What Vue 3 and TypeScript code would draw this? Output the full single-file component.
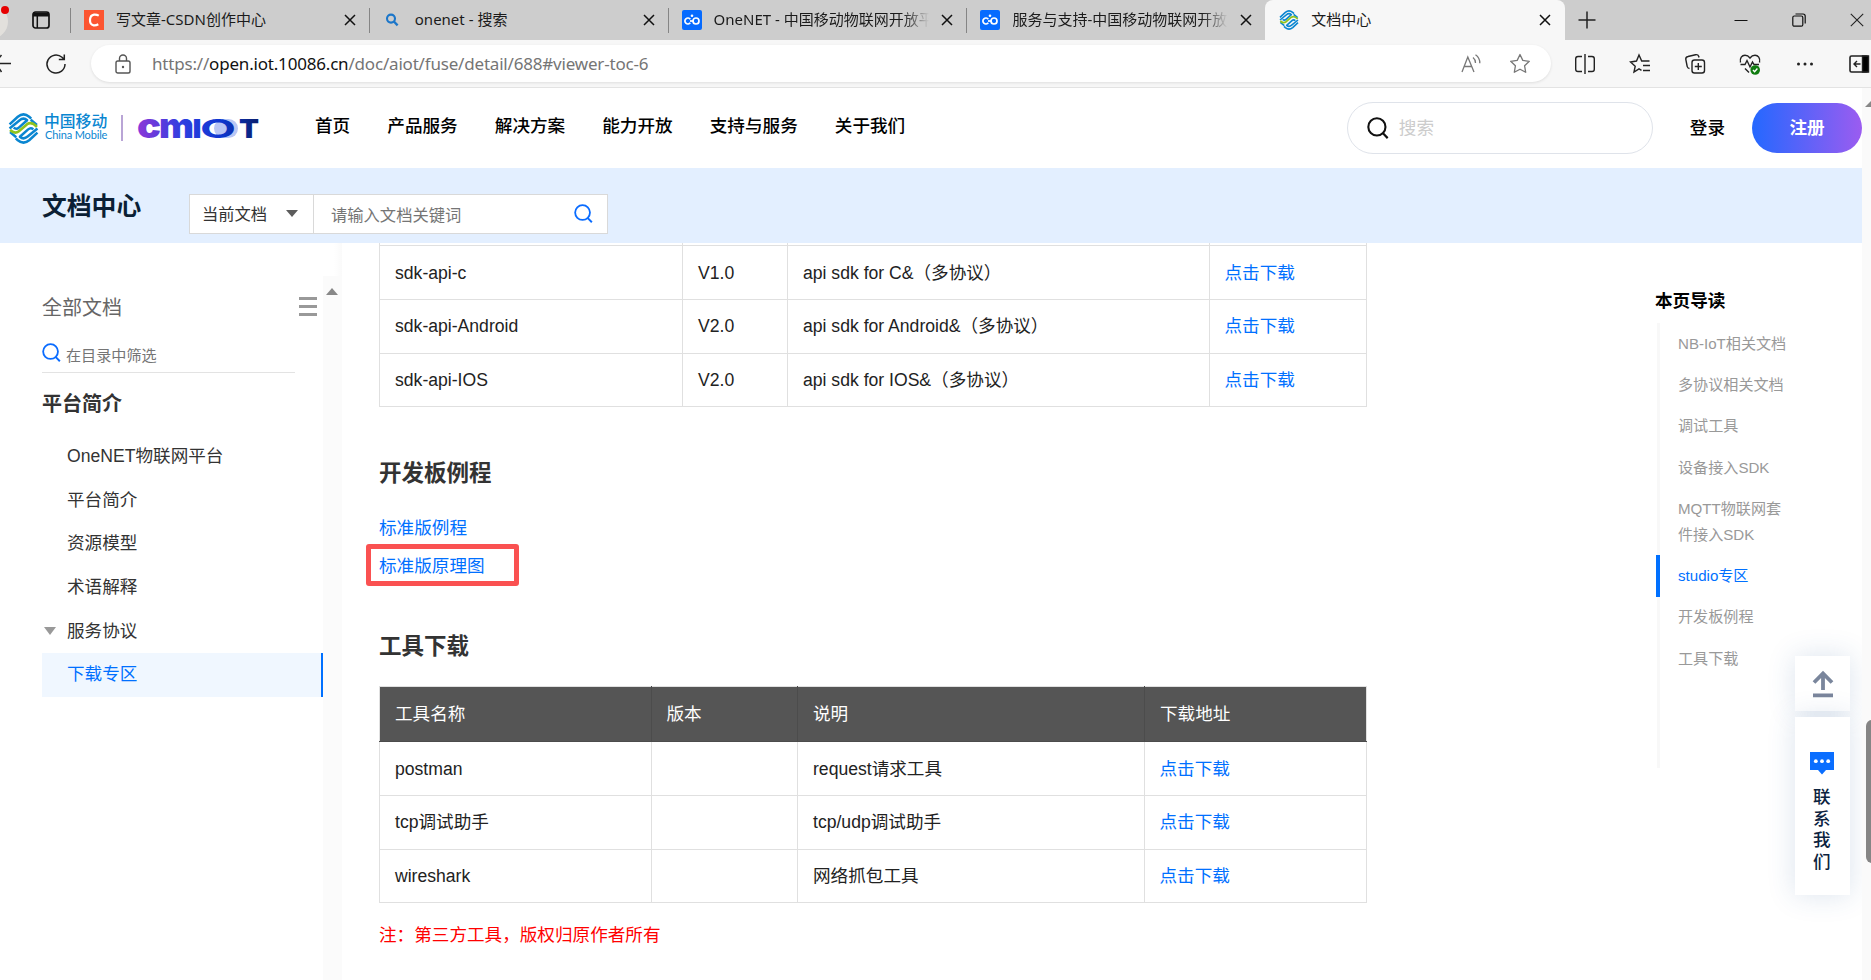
<script setup lang="ts">
interface Tab { title: string; icon: 'csdn' | 'search' | 'onenet' | 'mobile'; active?: boolean; faded?: boolean }
interface TocItem { text: string; active?: boolean }

const tabs: Tab[] = [
  { title: '写文章-CSDN创作中心', icon: 'csdn' },
  { title: 'onenet - 搜索', icon: 'search' },
  { title: 'OneNET - 中国移动物联网开放平台', icon: 'onenet', faded: true },
  { title: '服务与支持-中国移动物联网开放平台', icon: 'onenet', faded: true },
  { title: '文档中心', icon: 'mobile', active: true },
]
const nav: string[] = ['首页', '产品服务', '解决方案', '能力开放', '支持与服务', '关于我们']
const menu: string[] = ['OneNET物联网平台', '平台简介', '资源模型', '术语解释', '服务协议']
const sdkRows: string[][] = [
  ['sdk-api-c', 'V1.0', 'api sdk for C&（多协议）'],
  ['sdk-api-Android', 'V2.0', 'api sdk for Android&（多协议）'],
  ['sdk-api-IOS', 'V2.0', 'api sdk for IOS&（多协议）'],
]
const toolRows: string[][] = [
  ['postman', '', 'request请求工具'],
  ['tcp调试助手', '', 'tcp/udp调试助手'],
  ['wireshark', '', '网络抓包工具'],
]
const toc: TocItem[] = [
  { text: 'NB-IoT相关文档' },
  { text: '多协议相关文档' },
  { text: '调试工具' },
  { text: '设备接入SDK' },
  { text: 'MQTT物联网套件接入SDK' },
  { text: 'studio专区', active: true },
  { text: '开发板例程' },
  { text: '工具下载' },
]
</script>

<template>
  <div class="window">
    <svg class="defs" width="0" height="0">
      <defs>
        <symbol id="cm" viewBox="0 0 30 30">
          <g fill="none" stroke-linejoin="round">
            <g stroke="#0a86d1" stroke-width="2.4">
              <path d="M1.5 11 9.5 3.6Q15-1 20.5 3.6L22.5 5.4" />
              <path d="M1.5 15 11 7.2Q15 3.8 18.5 7L10.5 14.2Q8 16.4 5.5 14.2" />
              <path d="M28.500 19 20.500 26.400Q15 31 9.500 26.400L7.500 24.600" />
              <path d="M28.500 15 19 22.800Q15 26.200 11.500 23L19.500 15.800Q22 13.600 24.500 15.800" />
              <path d="M22 6.500 28 11.500M2 18.500 8 23.500" />
            </g>
            <path d="M2 16.500Q6.500 20.800 10.500 17.600L18.500 10.800Q23 8 28 13.500" stroke="#8fc31f" stroke-width="2.600" />
          </g>
        </symbol>
        <symbol id="mag" viewBox="0 0 20 20">
          <circle cx="9" cy="9" r="7.800" fill="none" stroke="currentColor" stroke-width="1.900" />
          <path d="M14.500 14.800 18.800 19.200" fill="none" stroke="currentColor" stroke-width="2" />
        </symbol>
      </defs>
    </svg>

    <header class="tabstrip">
      <div class="lead">
        <span class="avatar"></span><span class="reddot"></span>
        <svg class="ws" width="18" height="18" viewBox="0 0 18 18"><rect x="1" y="1" width="16" height="16" rx="2.500" fill="none" stroke="#111" stroke-width="1.700" /><path d="M1 1.500h16v4H1z" fill="#111" /><path d="M5.300 5v12" stroke="#111" stroke-width="1.500" /></svg>
      </div>
      <div v-for="(tab, i) in tabs" :key="i" class="tab" :class="{ active: tab.active }">
        <svg v-if="tab.icon === 'csdn'" class="fav" viewBox="0 0 20 20"><rect width="20" height="20" fill="#fc5531" /><path d="M14.800 5.600Q12.500 4.300 10 4.600 6.300 5.200 6 9.600 5.700 14.600 9.600 15.300 12 15.600 14.300 14.200" fill="none" stroke="#fff" stroke-width="2.200" /></svg>
        <svg v-else-if="tab.icon === 'search'" class="fav" viewBox="0 0 20 20"><circle cx="8" cy="8.600" r="4" fill="none" stroke="#1b76c9" stroke-width="2.100" /><path d="M10.900 11.500 14.600 15.400" stroke="#1b76c9" stroke-width="2.300" /></svg>
        <svg v-else-if="tab.icon === 'onenet'" class="fav" viewBox="0 0 20 20"><rect width="20" height="20" rx="2" fill="#066bff" /><g fill="none" stroke="#fff" stroke-width="1.700"><path d="M8.300 9.200A3 3 0 1 0 8.300 12.800" /><circle cx="14" cy="11" r="3" /><path d="M8 11h3" /></g><circle cx="10" cy="5.800" r="1.300" fill="#fff" /></svg>
        <svg v-else class="fav" viewBox="0 0 30 30"><use href="#cm" /></svg>
        <span class="tabtitle" :class="{ faded: tab.faded }">{{ tab.title }}</span>
        <svg class="x" width="12" height="12" viewBox="0 0 12 12"><path d="M1 1 11 11M11 1 1 11" stroke="#111" stroke-width="1.500" /></svg>
      </div>
      <svg class="plus" width="18" height="18" viewBox="0 0 18 18"><path d="M9 .5v17M.5 9h17" stroke="#222" stroke-width="1.500" /></svg>
      <div class="winctl">
        <svg width="14" height="14" viewBox="0 0 14 14"><path d="M.5 7.500h13" stroke="#111" /></svg>
        <svg width="14" height="14" viewBox="0 0 14 14"><rect x=".8" y="3" width="10" height="10.200" rx="1.500" fill="none" stroke="#111" stroke-width="1.200" /><path d="M3.500 1h7.500q2.200 0 2.200 2.200v7.300" fill="none" stroke="#111" stroke-width="1.200" /></svg>
        <svg width="14" height="14" viewBox="0 0 14 14"><path d="M.8.8 13.200 13.200M13.200.8.8 13.200" stroke="#222" stroke-width="1.100" /></svg>
      </div>
    </header>

    <div class="toolbar">
      <svg class="back" width="12" height="20" viewBox="0 0 12 20"><path d="M0 9.500h11M1.500 1-1 4M1.500 18l-2-3" stroke="#222" stroke-width="1.500" fill="none" /></svg>
      <svg class="reload" width="22" height="22" viewBox="0 0 22 22"><path d="M20 11a9 9 0 1 1-3-6.700L19 6.300M19.300 1.500v5h-5.500" fill="none" stroke="#222" stroke-width="1.500" /></svg>
      <div class="address">
        <svg width="16" height="20" viewBox="0 0 16 20"><rect x="1" y="7" width="14" height="12" rx="1.800" fill="none" stroke="#555" stroke-width="1.400" /><path d="M4.500 7V4.500a3.500 3.500 0 0 1 7 0V7" fill="none" stroke="#555" stroke-width="1.400" /><circle cx="8" cy="13" r="1.200" fill="#555" /></svg>
        <span class="url">https://<b>open.iot.10086.cn</b>/doc/aiot/fuse/detail/688#viewer-toc-6</span>
        <svg class="read" width="20" height="20" viewBox="0 0 20 20" fill="none" stroke="#777" stroke-width="1.300"><path d="M1 18 6.800 3 13 18M3.200 12.500h7.500M12 3.500q2.500 2 2.500 5.500M14.500.8q4.500 3.200 4.300 8.500" /></svg>
        <svg width="22" height="21" viewBox="0 0 22 21"><path d="M11 1.500 13.800 7.400 20.300 8.300 15.600 12.800 16.700 19.300 11 16.200 5.300 19.300 6.400 12.800 1.700 8.300 8.200 7.400Z" fill="none" stroke="#777" stroke-width="1.300" stroke-linejoin="round" /></svg>
      </div>
      <div class="tools">
        <svg viewBox="0 0 22 22"><path d="M8 3.500H4Q1.700 3.500 1.700 5.800V16.200Q1.700 18.500 4 18.500H8M14 3.500h4q2.300 0 2.300 2.300V16.200q0 2.300-2.300 2.300h-4M11 1v20" /></svg>
        <svg viewBox="0 0 22 22"><path d="M12.500 17.300 10 15.800 5 19 6.200 13.200 1.500 9 7.500 8 10 2 12.700 8H20.500M14 12.500h7M14 17.500h7" /></svg>
        <svg viewBox="0 0 22 22"><rect x="8" y="7" width="12.500" height="13" rx="2.500" /><path d="M14.300 10v7M10.800 13.500h7M5.500 15.500Q3.500 15.300 3.200 13.500L1.800 6.500Q1.500 4 4 3.500L11.500 1.700Q14 1.200 14.800 3.500L15 4.500" /></svg>
        <svg viewBox="0 0 22 22"><path d="M10 19.500 6 15.500M1.500 9.500C.5 5 3 2.300 6 2.300 8.500 2.300 10 3.700 11 5 12 3.700 13.500 2.300 16 2.300c3 0 5.500 2.700 4.500 7.200M1.500 11.500H6L8 7.500 11 14 13.500 9l1.500 2.500h5" /><circle cx="16.200" cy="17" r="4.800" fill="#107c10" stroke="none" /><path d="M14 17l1.600 1.700 2.800-3.200" stroke="#fff" /></svg>
        <svg viewBox="0 0 22 22"><g fill="#222" stroke="none"><circle cx="4.500" cy="11" r="1.500" /><circle cx="11" cy="11" r="1.500" /><circle cx="17.500" cy="11" r="1.500" /></g></svg>
        <svg viewBox="0 0 22 22"><rect x="1" y="3" width="18" height="16" rx="1.500" stroke-width="1.600" /><path d="M13.500 3h6v16h-6z" fill="#000" /><path d="M11.500 11H5M8 8l-3 3 3 3" /></svg>
      </div>
    </div>

    <div class="page">
      <div class="sitehead">
        <svg class="cmlogo" width="31" height="31"><use href="#cm" /></svg>
        <div class="brand"><span class="zh">中国移动</span><span class="en">China Mobile</span></div>
        <i class="bar"></i>
        <svg class="cmiot" width="124" height="24" viewBox="0 0 124 24">
          <defs>
            <linearGradient id="g" gradientUnits="userSpaceOnUse" x1="0" y1="0" x2="120" y2="0"><stop offset="0" stop-color="#8a38d8" /><stop offset=".38" stop-color="#2d3fe0" /><stop offset=".7" stop-color="#0d36cf" /><stop offset="1" stop-color="#0a2070" /></linearGradient>
          </defs>
          <rect x="76" y="3" width="24" height="19" rx="9.500" fill="#b9c6f5" />
          <g class="mark" fill="url(#g)">
            <text x="-1" y="21.600" font-size="34" textLength="24" lengthAdjust="spacingAndGlyphs">c</text>
            <text x="21" y="22" font-size="34" textLength="35" lengthAdjust="spacingAndGlyphs">m</text>
            <text x="54.500" y="22" font-size="26" textLength="9" lengthAdjust="spacingAndGlyphs">I</text>
            <text class="o" x="62" y="21.800" font-size="25.500" textLength="36" lengthAdjust="spacingAndGlyphs">O</text>
            <text x="101" y="22" font-size="26" textLength="20" lengthAdjust="spacingAndGlyphs">T</text>
          </g>
        </svg>
        <nav><a v-for="n in nav" :key="n">{{ n }}</a></nav>
        <div class="sitesearch"><svg width="22" height="22"><use href="#mag" /></svg><span>搜索</span></div>
        <a class="login">登录</a>
        <a class="register">注册</a>
      </div>

      <div class="band">
        <h1>文档中心</h1>
        <div class="docsearch">
          <div class="select">当前文档<i class="caret"></i></div>
          <div class="field"><span>请输入文档关键词</span><svg width="19" height="19"><use href="#mag" /></svg></div>
        </div>
      </div>

      <div class="body">
        <aside class="side">
          <div class="sidebody">
            <div class="all">全部文档<span class="burger"><i></i><i></i><i></i></span></div>
            <div class="filter"><svg width="19" height="19"><use href="#mag" /></svg><span>在目录中筛选</span></div>
            <h2>平台简介</h2>
            <ul>
              <li v-for="(m, i) in menu" :key="m"><i v-if="i === 4" class="fold"></i>{{ m }}</li>
              <li class="current">下载专区</li>
            </ul>
          </div>
          <div class="track"><i></i></div>
        </aside>

        <main>
          <table class="sdk">
            <colgroup><col class="a1" /><col class="a2" /><col class="a3" /><col class="a4" /></colgroup>
            <tbody>
              <tr class="cut"><td></td><td></td><td></td><td></td></tr>
              <tr v-for="r in sdkRows" :key="r[0]"><td v-for="(c, i) in r" :key="i">{{ c }}</td><td><a>点击下载</a></td></tr>
            </tbody>
          </table>
          <h3 class="h-board">开发板例程</h3>
          <p class="link"><a>标准版例程</a></p>
          <p class="link"><a>标准版原理图</a><span class="mark-box"></span></p>
          <h3 class="h-tools">工具下载</h3>
          <table class="toolt">
            <colgroup><col class="b1" /><col class="b2" /><col class="b3" /><col class="b4" /></colgroup>
            <thead><tr><th>工具名称</th><th>版本</th><th>说明</th><th>下载地址</th></tr></thead>
            <tbody>
              <tr v-for="r in toolRows" :key="r[0]"><td v-for="(c, i) in r" :key="i">{{ c }}</td><td><a>点击下载</a></td></tr>
            </tbody>
          </table>
          <p class="note">注：第三方工具，版权归原作者所有</p>
        </main>

        <aside class="toc">
          <h4>本页导读</h4>
          <ul><li v-for="t in toc" :key="t.text" :class="{ on: t.active }">{{ t.text }}</li></ul>
        </aside>
      </div>

      <div class="float">
        <div class="top"><svg width="22" height="28" viewBox="0 0 22 28"><path d="M11 20V3.500M2 12.500 11 3.500 20 12.500M1 25.300h20" fill="none" stroke="#7a869c" stroke-width="3.800" /></svg></div>
        <div class="contact">
          <svg width="24" height="23" viewBox="0 0 24 23"><path d="M0 0h24v18h-8l-4 4.500L8 18H0z" fill="#0a6eff" /><g fill="#fff"><circle cx="5.800" cy="9.200" r="1.900" /><circle cx="12" cy="9.200" r="1.900" /><circle cx="18.200" cy="9.200" r="1.900" /></g></svg>
          <span>联系我们</span>
        </div>
      </div>
      <div class="scroll"><i class="up"></i><i class="thumb"></i></div>
    </div>
  </div>
</template>

<style>
html, body { overflow: hidden; background: #fff; }
</style>

<style scoped>
* { box-sizing: border-box; }
h1, h2, h3, h4, p, ul { margin: 0; padding: 0; }
ul { list-style: none; }
svg { display: block; flex: none; }
.window { width: 1871px; height: 980px; display: flex; flex-direction: column; overflow: hidden; font-family: "Liberation Sans", "Noto Sans CJK SC", sans-serif; color: #222; white-space: nowrap; }
.defs { position: absolute; }

.tabstrip { height: 40px; flex: none; background: #cdcdcd; display: flex; align-items: center; font: 15px/20px "Noto Sans", "Noto Sans CJK SC", sans-serif; color: #1b1b1b; }
.lead { width: 70px; height: 40px; flex: none; position: relative; padding: 11px 0 0 32px; overflow: hidden; }
.avatar { position: absolute; left: -27px; top: 4px; width: 35px; height: 35px; border-radius: 50%; background: #e2e0dc; }
.reddot { position: absolute; left: 1px; top: 6px; width: 8px; height: 8px; border-radius: 50%; background: #e60000; }
.tab { width: 298.800px; height: 40px; flex: none; display: flex; align-items: center; padding: 0 13px 0 14px; position: relative; }
.tab:not(.active)::before { content: ""; position: absolute; left: 0; top: 8px; width: 1px; height: 25px; background: #858585; }
.tab.active { background: #f7f7f7; border-radius: 8px 8px 0 0; width: 300px; padding: 0 14px 0 14px; }
.fav { width: 20px; height: 20px; margin-right: 12px; }
.tabtitle { flex: 1; overflow: hidden; font-size: 15px; margin-top: -2px; }
.tabtitle.faded { -webkit-mask-image: linear-gradient(90deg, #000 88%, transparent); mask-image: linear-gradient(90deg, #000 88%, transparent); }
.x { margin-left: 12px; }
.plus { margin-left: 13px; }
.winctl { margin-left: auto; display: flex; gap: 44px; padding-right: 7px; }

.toolbar { height: 48px; flex: none; background: #f7f7f7; border-bottom: 1px solid #e3e3e3; display: flex; align-items: center; }
.back { margin-right: 33px; }
.reload { margin-right: 24px; }
.address { width: 1460px; height: 37px; border-radius: 19px; background: #fff; box-shadow: 0 1px 3px rgba(0, 0, 0, .1); display: flex; align-items: center; padding: 0 20px 0 24px; }
.url { margin-left: 21px; font: 17px/24px "Noto Sans", "Open Sans", sans-serif; letter-spacing: -.19px; color: #757575; }
.url b { font-weight: 400; color: #111; }
.read { margin-left: auto; margin-right: 28px; }
.tools { display: flex; gap: 33px; padding-left: 23.500px; }
.tools svg { width: 22px; height: 22px; fill: none; stroke: #222; stroke-width: 1.400; }

.page { height: 892px; flex: none; position: relative; }
.sitehead { height: 80px; width: 1862px; display: flex; align-items: center; padding-left: 8px; }
.brand { margin-left: 5px; width: 65px; display: flex; flex-direction: column; color: #0a86d1; position: relative; top: -2px; }
.zh { font: 500 15.800px/17px "Noto Sans CJK SC", sans-serif; }
.en { font: 11px/12px Lato, sans-serif; letter-spacing: -.15px; padding-left: 1px; }
.bar { width: 2px; height: 26px; background: #b9a5d6; margin-left: 12px; }
.cmiot { margin-left: 15px; overflow: visible; }
.mark { font-family: Inter, sans-serif; font-weight: 900; }
.o { font-weight: 700; }
nav { display: flex; gap: 37.100px; margin-left: 53px; font-size: 17.600px; font-weight: 500; color: #000; position: relative; top: -4px; }
.sitesearch { margin-left: auto; width: 306px; height: 52px; border: 1px solid #dfe3ea; border-radius: 26px; display: flex; align-items: center; padding-left: 19px; font-size: 17.600px; color: #ccc; }
.sitesearch span { margin-top: -4px; }
.sitesearch svg { color: #111; margin-right: 10px; }
.login { margin: -3px 27px 0 37px; font-size: 17.600px; font-weight: 500; color: #000; }
.register { width: 110px; height: 50px; border-radius: 25px; background: linear-gradient(90deg, #2468ff, #9b5cf0); color: #fff; font-weight: 700; font-size: 17.600px; line-height: 50px; text-align: center; }

.band { width: 1862px; height: 75px; background: #e3efff; display: flex; padding-left: 42px; }
h1 { font-size: 24.800px; line-height: 36px; color: #0b1f35; margin-top: 21px; width: 147px; font-weight: 700; }
.docsearch { margin-top: 26px; width: 419px; height: 40px; display: flex; background: #fff; border: 1px solid #d9d9d9; font-size: 16.300px; color: #333; }
.select { width: 124px; border-right: 1px solid #d9d9d9; display: flex; align-items: center; padding: 0 0 3px 12px; }
.caret { margin: 2px 0 0 19px; border: 6.500px solid transparent; border-top: 7.500px solid #5c5c5c; border-bottom: 0; }
.field { flex: 1; display: flex; align-items: center; justify-content: space-between; padding: 0 14px 1px 17px; color: #757575; }
.field svg { color: #0a6cff; }

.body { display: flex; height: 737px; overflow: hidden; width: 1862px; }
.side { width: 342px; display: flex; flex: none; background: linear-gradient(90deg, #fff 334px, #fafafa 342px); }
.sidebody { width: 323px; padding: 45px 0 0 42px; }
.all { display: flex; justify-content: space-between; align-items: center; width: 275px; height: 36px; font-size: 20px; color: #666; }
.burger { display: grid; gap: 5px; }
.burger i { width: 18px; height: 3px; background: #999; }
.filter { width: 253px; height: 49px; border-bottom: 1px solid #e3e3e3; display: flex; align-items: center; font-size: 15.100px; color: #757575; padding-top: 12px; }
.filter svg { color: #0a6cff; margin: -4px 5px 0 0; }
h2 { font-size: 20px; line-height: 30px; color: #333; margin: 16px 0 16px; }
.side li { height: 43.700px; line-height: 43.700px; font-size: 17.600px; color: #333; padding-left: 25px; position: relative; }
.side li.current { background: #f0f7ff; color: #0070ff; border-right: 2px solid #0070ff; }
.fold { position: absolute; left: 2px; top: 17px; border: 6.500px solid transparent; border-top: 8px solid #999; border-bottom: 0; }
.track { width: 19px; margin-top: 33px; background: #fbfbfb; padding: 12px 0 0 3px; }
.track i { display: block; width: 0; border: 6.500px solid transparent; border-bottom: 7px solid #888; border-top: 0; }

main { margin-left: 37px; width: 989px; flex: none; }
table { border-collapse: collapse; table-layout: fixed; width: 987px; font-size: 17.600px; color: #222; }
td, th { border: 1px solid #e0e0e0; padding: 0 15px; text-align: left; font-weight: 400; height: 53.700px; line-height: 26px; }
.sdk { margin-top: -51.500px; }
.a1 { width: 303px; } .a2 { width: 105px; } .a3 { width: 422px; } .a4 { width: 157px; }
.b1 { width: 272px; } .b2 { width: 146px; } .b3 { width: 347px; } .b4 { width: 222px; }
td:last-child, th:nth-child(2) { padding-left: 14.500px; }
th { background: #555; color: #fff; height: 55px; border-color: #e0e0e0 #4c4c4c #4c4c4c; }
th:first-child { border-left-color: #e0e0e0; }
th:last-child { border-right-color: #e0e0e0; }
a { color: #0070ff; }
nav a, .login { color: #000; }
.register { color: #fff; }
h3 { font-size: 22.500px; line-height: 34px; color: #333; }
.h-board { margin: 50px 0 18px; }
.link { height: 38px; line-height: 38px; font-size: 17.600px; position: relative; }
.mark-box { position: absolute; left: -13px; top: -3px; width: 153px; height: 42px; border: 5px solid #fa5151; border-radius: 3px; }
.h-tools { margin: 45px 0 22px; }
.note { color: #f00; font-size: 17.600px; line-height: 28px; margin-top: 18px; }

.toc { margin-left: 287px; width: 160px; padding-top: 45px; }
h4 { font-size: 17.600px; line-height: 26px; font-weight: 700; color: #000; margin-bottom: 9px; }
.toc ul { height: 445px; background: linear-gradient(90deg, #fff 2px, #f8f8f8 2px, #f8f8f8 5px, #fff 5px); }
.toc li { margin-left: 1px; padding: 7.700px 0 7.600px 18px; font-size: 15.100px; line-height: 26px; color: #999; border-left: 4px solid transparent; white-space: normal; width: 136px; }
.toc li.on { color: #0070ff; border-color: #0070ff; }

.float { position: absolute; left: 1795px; top: 568px; width: 55px; display: grid; gap: 6px; }
.float > div { background: #fff; box-shadow: 0 0 28px rgba(40, 90, 150, .17); display: flex; flex-direction: column; align-items: center; }
.top { height: 55px; justify-content: center; }
.contact { height: 178px; padding: 35px 1px 0 0; }
.contact span { width: 18px; white-space: normal; margin-top: 12px; font-size: 17.600px; line-height: 21.500px; font-weight: 500; color: #0c2340; }
.scroll { position: absolute; right: 0; top: 0; width: 9px; height: 892px; background: #fafafa; overflow: hidden; }
.up { position: absolute; left: 3px; top: 12px; border: 7px solid transparent; border-bottom: 7px solid #888; border-top: 0; }
.thumb { position: absolute; left: 4px; top: 632px; width: 12px; height: 143px; border-radius: 6px; background: #858585; }
</style>
